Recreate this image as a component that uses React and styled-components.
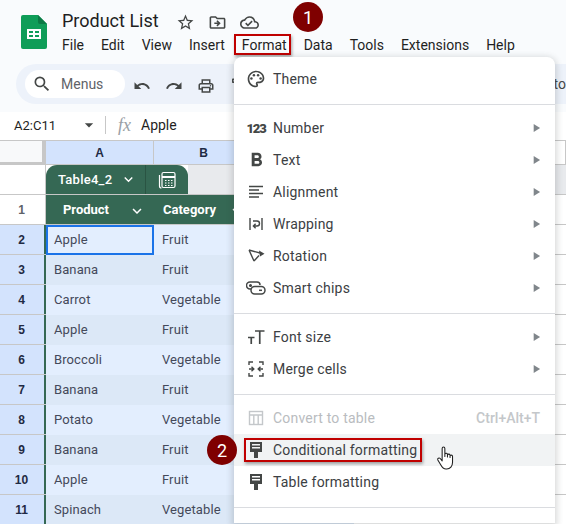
import React from 'react';
import styled, { createGlobalStyle } from 'styled-components';
import {
  MdOutlineStarBorder,
  MdOutlineDriveFileMove,
  MdOutlineCloudDone,
  MdSearch,
  MdUndo,
  MdRedo,
  MdOutlinePrint,
  MdOutlineFormatPaint,
  MdOutlinePalette,
  MdFormatBold,
  MdKeyboardArrowDown,
  MdArrowDropDown,
  MdPlayArrow,
} from 'react-icons/md';

const GlobalStyle = createGlobalStyle`
  html, body {
    margin: 0;
    padding: 0;
    background: #fff;
  }
  * {
    box-sizing: border-box;
  }
`;

const Page = styled.div`
  position: relative;
  width: 566px;
  height: 524px;
  overflow: hidden;
  background: #fff;
  font-family: Roboto, "Liberation Sans", sans-serif;
  color: #3c4043;
`;

const Header = styled.header`
  height: 64px;
  background: #f9fbfd;
  display: flex;
  padding: 15px 0 0 21px;
`;

const TitleBlock = styled.div`
  margin-left: 15px;
  margin-top: -8px;
  display: flex;
  flex-direction: column;
`;

const TitleRow = styled.div`
  display: flex;
  align-items: center;
  height: 26px;
`;

const Title = styled.h1`
  margin: 0 7px 0 0;
  font-size: 18px;
  font-weight: 400;
  color: #1f1f1f;
  width: 100px;
`;

const TitleIcon = styled.span`
  display: flex;
  width: 32px;
  justify-content: center;
  color: #444746;
  font-size: 19px;
  margin-top: 4px;
`;

const MenuBar = styled.nav`
  display: flex;
  gap: 17px;
  font-size: 14px;
  height: 20px;
  align-items: center;
  margin-top: 2px;
  color: #1f1f1f;
`;

const MenuBarItem = styled.span`
  position: relative;
  ${(p) => p.$marked && `
    &::after {
      content: '';
      position: absolute;
      inset: -3px -4px -2px -8px;
      border: 2px solid #c00000;
      box-shadow: 1px 2px 3px rgba(0, 0, 0, 0.35);
    }
  `}
`;

const ToolbarWrap = styled.div`
  height: 48px;
  background: #f9fbfd;
  padding-left: 16px;
`;

const Toolbar = styled.div`
  height: 40px;
  background: #edf2fa;
  border-radius: 20px 0 0 20px;
  display: flex;
  align-items: center;
  padding-left: 9px;
  position: relative;
`;

const SearchPill = styled.div`
  width: 100px;
  height: 28px;
  border-radius: 14px;
  background: #fff;
  display: flex;
  align-items: center;
  padding-left: 7px;
  gap: 9px;
  font-size: 14px;
  color: #5f6368;
  margin-right: 1px;
`;

const ToolIcon = styled.span`
  display: flex;
  width: 32px;
  justify-content: center;
  color: #444746;
  font-size: 18px;
  margin-top: 3px;
`;

const ToolText = styled.span`
  margin-left: auto;
  font-size: 14px;
  color: #444746;
`;

const FormulaBar = styled.div`
  height: 28px;
  display: flex;
  align-items: center;
  background: #fff;
  font-size: 14px;
  color: #1f1f1f;
  padding-bottom: 2px;
`;

const NameBox = styled.div`
  width: 106px;
  padding-left: 14px;
  display: flex;
  align-items: center;
  justify-content: space-between;
  padding-right: 6px;
  border-right: 1px solid #c7c7c7;
  height: 18px;
  font-size: 13px;
`;

const FxMark = styled.span`
  font-family: "Liberation Serif", serif;
  font-style: italic;
  font-size: 18px;
  color: #9aa0a6;
  margin: 0 10px 0 12px;
`;

const ColumnHeader = styled.div`
  height: 25px;
  display: grid;
  grid-template-columns: 46px 108px 100px 100px 1fr;
  border-top: 1px solid #c7c7c7;
  font: bold 12px "Liberation Sans", sans-serif;
  color: #1f2a44;
`;

const Corner = styled.div`
  background: #f8f9fa;
  border-right: 4px solid #c7c7c7;
  border-bottom: 3px solid #c7c7c7;
`;

const ColLabel = styled.div`
  background: ${(p) => (p.$on ? '#d3e3fd' : '#fff')};
  border-right: 1px solid #c7c7c7;
  border-bottom: 1px solid #c7c7c7;
  display: flex;
  align-items: center;
  justify-content: center;
`;

const TabRow = styled.div`
  height: 30px;
  display: grid;
  grid-template-columns: 46px 142px 1fr;
  border-bottom: 1px solid #c7c7c7;
`;

const TabGutter = styled.div`
  background: #fff;
  border-right: 1px solid #c7c7c7;
`;

const TableTab = styled.div`
  background: #356854;
  border-radius: 11px 11px 0 0;
  display: flex;
  align-items: center;
  color: #fff;
  font-size: 13px;
  font-weight: 500;
  letter-spacing: 0.25px;
  padding-left: 12px;
`;

const TabName = styled.span`
  width: 88px;
  display: flex;
  align-items: center;
  justify-content: space-between;
  padding-right: 8px;
  height: 100%;
  border-right: 1px solid #2a5443;
`;

const TabIcon = styled.span`
  flex: 1;
  display: flex;
  justify-content: center;
`;

const TabRest = styled.div`
  background: #e8eaed;
`;

const Row = styled.div`
  height: 30px;
  display: grid;
  grid-template-columns: 46px 108px 100px 100px 1fr;
  border-bottom: 1px solid #c7c7c7;
`;

const RowLabel = styled.div`
  background: ${(p) => (p.$on ? '#d3e3fd' : '#fff')};
  border-right: 1px solid ${(p) => (p.$on ? '#356854' : '#c7c7c7')};
  box-shadow: ${(p) => (p.$on ? 'inset -1px 0 0 #356854' : 'none')};
  display: flex;
  align-items: center;
  justify-content: center;
  font: bold 12px "Liberation Sans", sans-serif;
  color: ${(p) => (p.$on ? '#1f2a44' : '#5f6368')};
  padding-right: 2px;
`;

const HeadCell = styled.div`
  background: #356854;
  color: #fff;
  font-size: 13px;
  font-weight: 700;
  display: flex;
  align-items: center;
  justify-content: ${(p) => (p.$center ? 'center' : 'flex-start')};
  padding: ${(p) => (p.$center ? '0 28px 0 0' : '0 0 0 9px')};
  position: relative;
`;

const HeadChevron = styled.span`
  position: absolute;
  right: 8px;
  top: 7px;
  display: flex;
  font-size: 18px;
`;

const Cell = styled.div`
  background: ${(p) => (p.$alt ? '#dce8f7' : '#e3eefe')};
  font-size: 13px;
  letter-spacing: 0.1px;
  color: #44495a;
  display: flex;
  align-items: center;
  padding: 0 0 2px 8px;
  margin-bottom: -1px;
  ${(p) => p.$selected && `
    box-shadow: inset 0 0 0 2px #1a73e8;
  `}
`;

const Blank = styled.div`
  background: #fff;
`;

const Menu = styled.div`
  position: absolute;
  left: 234px;
  top: 57px;
  width: 321px;
  height: 466px;
  background: #fff;
  border-radius: 8px 8px 0 0;
  box-shadow: 0 2px 6px 2px rgba(60, 64, 67, 0.2);
  padding-top: 6px;
`;

const MenuItem = styled.div`
  height: 32px;
  display: flex;
  align-items: center;
  padding: 0 15px 0 10px;
  font-size: 14px;
  letter-spacing: 0.2px;
  color: ${(p) => (p.$disabled ? '#b9bcc0' : '#3c4043')};
  background: ${(p) => (p.$hover ? '#f1f3f4' : 'transparent')};
`;

const MenuIcon = styled.span`
  width: 24px;
  height: 24px;
  display: flex;
  align-items: center;
  justify-content: center;
  margin-right: 5px;
  font-size: 20px;
  color: ${(p) => (p.$disabled ? '#c4c7ca' : '#444746')};
`;

const NumberGlyph = styled.span`
  font-size: 13px;
  font-weight: 900;
  letter-spacing: -1.2px;
  color: #444746;
`;

const MenuLabel = styled.span`
  position: relative;
  ${(p) => p.$marked && `
    &::after {
      content: '';
      position: absolute;
      inset: -4px -5px -4px -29px;
      border: 2px solid #c00000;
      box-shadow: 1px 2px 3px rgba(0, 0, 0, 0.35);
    }
  `}
`;

const Arrow = styled.span`
  margin-left: auto;
  display: flex;
  font-size: 14px;
  color: #80868b;
  margin-right: -3px;
`;

const Shortcut = styled.span`
  margin-left: auto;
  font-weight: 500;
  color: #c4c7ca;
  font-size: 14px;
  letter-spacing: 0;
`;

const Divider = styled.div`
  height: 1px;
  background: #dadce0;
  margin: 9px 0 7px;
`;

const Badge = styled.div`
  position: absolute;
  left: ${(p) => p.$x - 15}px;
  top: ${(p) => p.$y - 15}px;
  width: 30px;
  height: 30px;
  border-radius: 50%;
  background: #7f0000;
  color: #fff;
  font-size: 18px;
  display: flex;
  align-items: center;
  justify-content: center;
`;

const Cursor = styled.svg`
  position: absolute;
  left: 436px;
  top: 446px;
  width: 20px;
  height: 25px;
`;

const SheetsLogo = () => (
  <svg width="26" height="34" viewBox="0 0 26 34">
    <path d="M2 0h15l9 9v23a2 2 0 0 1-2 2H2a2 2 0 0 1-2-2V2a2 2 0 0 1 2-2z" fill="#0f9d58" />
    <path d="M17 0l9 9h-7a2 2 0 0 1-2-2z" fill="#0b7a45" />
    <path d="M6 14h14v10H6z M8 16v2h4v-2z M14 16v2h4v-2z M8 20v2h4v-2z M14 20v2h4v-2z" fill="#fff" fillRule="evenodd" />
  </svg>
);

const AlignIcon = () => (
  <svg width="16" height="14" viewBox="0 0 16 14" fill="none" stroke="#444746" strokeWidth="1.3">
    <path d="M1 1.500h14 M1 5h10 M1 8.500h14 M1 12h10" />
  </svg>
);

const ChipsIcon = () => (
  <svg width="20" height="20" viewBox="0 0 20 20" fill="none" stroke="#444746" strokeWidth="1.5">
    <path d="M5 11H4a3 3 0 0 1 0-7h7a3 3 0 0 1 3 3" />
    <rect x="5" y="8.500" width="14" height="7.500" rx="3.700" />
    <circle cx="4.500" cy="7.500" r="0.800" fill="#444746" />
    <path d="M13 12.300h3" />
  </svg>
);

const FontSizeIcon = () => (
  <svg width="18" height="16" viewBox="0 0 18 16" fill="none" stroke="#444746" strokeWidth="1.7">
    <path d="M1 8.500h6.500 M4.250 8.500V15 M8 2h9.500 M12.750 2v13" />
  </svg>
);

const MergeIcon = () => (
  <svg width="18" height="18" viewBox="0 0 18 18" fill="none" stroke="#444746" strokeWidth="1.4">
    <path d="M2 5V2h4 M12 2h4v3 M2 13v3h4 M12 16h4v-3" />
    <path d="M2 9h4 M4.500 6.800L6.800 9l-2.300 2.200 M16 9h-4 M13.500 6.800L11.200 9l2.300 2.200" />
  </svg>
);

const WrapIcon = () => (
  <svg width="16" height="16" viewBox="0 0 16 16" fill="none" stroke="#444746" strokeWidth="1.4">
    <path d="M2 2v12 M14 2v12" />
    <path d="M5 5h4a2 2 0 0 1 0 5H6 M7.600 7.800L5.400 10l2.200 2.200" />
  </svg>
);

const RotationIcon = () => (
  <svg width="20" height="20" viewBox="0 0 20 20" fill="none" stroke="#444746" strokeWidth="1.4">
    <path d="M3 4l5 11 M3 4l11 3 M8 15l5-5.500" />
    <path d="M13 4.500l5.500 3.200-4.500 2.800z" fill="#444746" stroke="none" />
  </svg>
);

const CalcIcon = () => (
  <svg width="18" height="18" viewBox="0 0 18 18" fill="none" stroke="#fff" strokeWidth="1.2">
    <path d="M1.500 4v11a2 2 0 0 0 2 2" />
    <rect x="4" y="1.500" width="13" height="15" rx="1.500" />
    <path d="M4 6h13" strokeWidth="2" />
    <path d="M7 9.500h1.500M10 9.500h1.500M13 9.500h1.500M7 12h1.500M10 12h1.500M13 12h1.500M7 14.500h1.500M10 14.500h1.500M13 14.500h1.500" />
  </svg>
);

const ConvertIcon = () => (
  <svg width="16" height="16" viewBox="0 0 16 16" fill="none" stroke="#c4c7ca" strokeWidth="1.4">
    <rect x="1.500" y="1.500" width="13" height="13" />
    <path d="M1.500 5h13 M5.800 5v9.500 M10.200 5v9.500" />
  </svg>
);

const PaintIcon = () => (
  <svg width="14" height="18" viewBox="0 0 14 18">
    <path d="M1 1h12v9H1z M3 3v1.500h8V3z M3 6v1.500h8V6z" fill="#444746" fillRule="evenodd" />
    <path d="M1 8h12v3H1z" fill="#444746" />
    <path d="M5 11h4v6H5z" fill="#444746" />
  </svg>
);

const rows = [
  ['Apple', 'Fruit'],
  ['Banana', 'Fruit'],
  ['Carrot', 'Vegetable'],
  ['Apple', 'Fruit'],
  ['Broccoli', 'Vegetable'],
  ['Banana', 'Fruit'],
  ['Potato', 'Vegetable'],
  ['Banana', 'Fruit'],
  ['Apple', 'Fruit'],
  ['Spinach', 'Vegetable'],
];

const menuGroups = [
  [{ label: 'Theme', icon: <MdOutlinePalette /> }],
  [
    { label: 'Number', icon: <NumberGlyph>123</NumberGlyph>, sub: true },
    { label: 'Text', icon: <MdFormatBold size={23} />, sub: true },
    { label: 'Alignment', icon: <AlignIcon />, sub: true },
    { label: 'Wrapping', icon: <WrapIcon />, sub: true },
    { label: 'Rotation', icon: <RotationIcon />, sub: true },
    { label: 'Smart chips', icon: <ChipsIcon />, sub: true },
  ],
  [
    { label: 'Font size', icon: <FontSizeIcon />, sub: true },
    { label: 'Merge cells', icon: <MergeIcon />, sub: true },
  ],
  [
    { label: 'Convert to table', icon: <ConvertIcon />, disabled: true, shortcut: 'Ctrl+Alt+T' },
    { label: 'Conditional formatting', icon: <PaintIcon />, hover: true, marked: true },
    { label: 'Table formatting', icon: <PaintIcon /> },
  ],
];

const App = () => (
  <Page>
    <GlobalStyle />
    <Header>
      <SheetsLogo />
      <TitleBlock>
        <TitleRow>
          <Title>Product List</Title>
          <TitleIcon><MdOutlineStarBorder /></TitleIcon>
          <TitleIcon><MdOutlineDriveFileMove /></TitleIcon>
          <TitleIcon><MdOutlineCloudDone /></TitleIcon>
        </TitleRow>
        <MenuBar>
          {['File', 'Edit', 'View', 'Insert', 'Format', 'Data', 'Tools', 'Extensions', 'Help'].map((m) => (
            <MenuBarItem key={m} $marked={m === 'Format'}>{m}</MenuBarItem>
          ))}
        </MenuBar>
      </TitleBlock>
    </Header>

    <ToolbarWrap>
      <Toolbar>
        <SearchPill>
          <MdSearch size={20} color="#444746" />
          Menus
        </SearchPill>
        <ToolIcon><MdUndo /></ToolIcon>
        <ToolIcon><MdRedo /></ToolIcon>
        <ToolIcon><MdOutlinePrint /></ToolIcon>
        <ToolIcon><MdOutlineFormatPaint /></ToolIcon>
        <ToolText>to</ToolText>
      </Toolbar>
    </ToolbarWrap>

    <FormulaBar>
      <NameBox>
        A2:C11
        <MdArrowDropDown size={20} color="#444746" />
      </NameBox>
      <FxMark>fx</FxMark>
      Apple
    </FormulaBar>

    <ColumnHeader>
      <Corner />
      <ColLabel $on>A</ColLabel>
      <ColLabel $on>B</ColLabel>
      <ColLabel $on />
      <ColLabel />
    </ColumnHeader>

    <TabRow>
      <TabGutter />
      <TableTab>
        <TabName>
          Table4_2
          <MdKeyboardArrowDown size={17} />
        </TabName>
        <TabIcon><CalcIcon /></TabIcon>
      </TableTab>
      <TabRest />
    </TabRow>

    <Row>
      <RowLabel>1</RowLabel>
      <HeadCell $center>
        Product
        <HeadChevron><MdKeyboardArrowDown /></HeadChevron>
      </HeadCell>
      <HeadCell>
        Category
        <HeadChevron><MdKeyboardArrowDown /></HeadChevron>
      </HeadCell>
      <HeadCell />
      <Blank />
    </Row>

    {rows.map(([product, category], i) => (
      <Row key={i}>
        <RowLabel $on>{i + 2}</RowLabel>
        <Cell $alt={i % 2 === 1} $selected={i === 0}>{product}</Cell>
        <Cell $alt={i % 2 === 1}>{category}</Cell>
        <Cell $alt={i % 2 === 1} />
        <Blank />
      </Row>
    ))}

    <Menu>
      {menuGroups.map((group, g) => (
        <React.Fragment key={g}>
          {group.map((item) => (
            <MenuItem key={item.label} $disabled={item.disabled} $hover={item.hover}>
              <MenuIcon $disabled={item.disabled}>{item.icon}</MenuIcon>
              <MenuLabel $marked={item.marked}>{item.label}</MenuLabel>
              {item.sub && <Arrow><MdPlayArrow /></Arrow>}
              {item.shortcut && <Shortcut>{item.shortcut}</Shortcut>}
            </MenuItem>
          ))}
          <Divider />
        </React.Fragment>
      ))}
    </Menu>

    <Badge $x={308} $y={17}>1</Badge>
    <Badge $x={222} $y={450}>2</Badge>

    <Cursor viewBox="0 0 20 26">
      <path
        d="M6 2.500a1.400 1.400 0 0 1 2.800 0V11V8.500a1.400 1.400 0 0 1 2.700 0V11.500V9.500a1.400 1.400 0 0 1 2.700 0V12V10.800a1.300 1.300 0 0 1 2.600 0V17c0 4-2.500 7-6 7H10c-3 0-4.200-2-5.500-4.500L1.500 14.500c-.8-1.600 1.300-2.800 2.500-1.500L6 15.500z"
        fill="#fff"
        stroke="#1f1f1f"
        strokeWidth="1.100"
        strokeLinejoin="round"
      />
    </Cursor>
  </Page>
);

export default App;
